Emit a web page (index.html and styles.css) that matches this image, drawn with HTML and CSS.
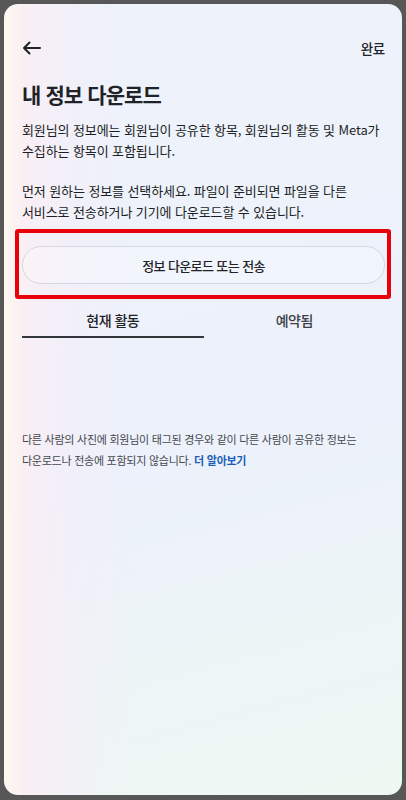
FILE: index.html
```html
<!DOCTYPE html>
<html lang="ko">
<head>
<meta charset="utf-8">
<title>내 정보 다운로드</title>
<link rel="stylesheet" href="styles.css">
</head>
<body>
<div class="screen">
  <header class="topbar">
    <svg class="back" width="19" height="14" viewBox="0 0 19 14" aria-label="뒤로">
      <path d="M18 7H2M7.5 1.5L2 7l5.5 5.5" fill="none" stroke="#1f2226" stroke-width="2" stroke-linecap="round" stroke-linejoin="round"/>
    </svg>
    <span class="done">완료</span>
  </header>
  <h1 class="title">내 정보 다운로드</h1>
  <p class="text p1">회원님의 정보에는 회원님이 공유한 항목, 회원님의 활동 및 Meta가<br>수집하는 항목이 포함됩니다.</p>
  <p class="text p2">먼저 원하는 정보를 선택하세요. 파일이 준비되면 파일을 다른<br>서비스로 전송하거나 기기에 다운로드할 수 있습니다.</p>
  <div class="highlight">
    <button class="action">정보 다운로드 또는 전송</button>
  </div>
  <nav class="tabs">
    <div class="tab active">현재 활동</div>
    <div class="tab">예약됨</div>
  </nav>
  <p class="note">다른 사람의 사진에 회원님이 태그된 경우와 같이 다른 사람이 공유한 정보는<br>다운로드나 전송에 포함되지 않습니다. <a class="link">더 알아보기</a></p>
</div>
</body>
</html>
```
FILE: styles.css
```css
html, body {
  margin: 0;
  padding: 0;
  background: #575757;
}
body {
  width: 406px;
  height: 800px;
  overflow: hidden;
  font-family: "Noto Sans CJK KR", "Noto Sans", sans-serif;
  color: #1f2226;
}
.screen {
  box-sizing: border-box;
  width: 398px;
  height: 791px;
  margin: 4px 4px 5px 4px;
  border-radius: 14px;
  padding: 0 17px 0 18px;
  overflow: hidden;
  background:
    linear-gradient(90deg, rgba(255,247,238,0.95) 0px, rgba(251,238,244,0.85) 22px, rgba(246,238,248,0.55) 60px, rgba(238,243,252,0) 130px),
    linear-gradient(165deg, #eef3fb 0%, #ecf1fb 55%, #eef8f2 100%);
}
.topbar {
  margin-top: 32px;
  height: 24px;
  display: flex;
  align-items: center;
  justify-content: space-between;
}
.back { display: block; }
.done {
  font-size: 13.5px;
  font-weight: 500;
  letter-spacing: -0.3px;
  line-height: 24px;
}
.title {
  margin: 19px 0 0;
  font-size: 21px;
  line-height: 30px;
  font-weight: 700;
  letter-spacing: -0.9px;
}
.text {
  margin: 0;
  font-size: 13px;
  line-height: 21px;
  font-weight: 400;
  letter-spacing: -0.1px;
  color: #1c1f23;
}
.p1 { margin-top: 10px; }
.p2 { margin-top: 19px; }
.highlight {
  margin: 7px -6px 0 -7px;
  border: 4px solid #e8000b;
  border-radius: 3px;
  padding: 13px 2px 11px 3px;
}
.action {
  display: block;
  width: 100%;
  height: 38px;
  border: 1px solid #d6d7dc;
  border-radius: 19px;
  background: rgba(255,255,255,0.25);
  font-family: inherit;
  font-size: 13px;
  font-weight: 500;
  letter-spacing: -0.6px;
  color: #1f2226;
  padding: 0;
}
.tabs {
  display: flex;
}
.tab {
  flex: 1;
  text-align: center;
  padding: 11px 0 6px;
  line-height: 20px;
  font-size: 14px;
  font-weight: 500;
  letter-spacing: -0.5px;
  color: #3d4045;
  border-bottom: 2px solid transparent;
}
.tab.active {
  color: #1f2226;
  border-bottom-color: #33363b;
}
.note {
  margin: 91px 0 0;
  font-size: 11px;
  line-height: 21px;
  font-weight: 400;
  letter-spacing: -0.25px;
  color: #45484d;
}
.link {
  color: #1c5fb8;
  font-weight: 700;
}
```
